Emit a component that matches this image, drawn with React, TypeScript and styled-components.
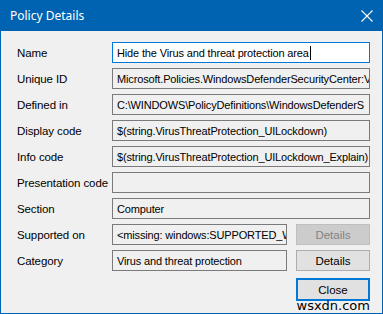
import React from "react";
import styled, { createGlobalStyle } from "styled-components";

const Global = createGlobalStyle`
  html, body { margin: 0; padding: 0; background: #f0f0f0; }
  body { font-family: "Noto Sans", "Liberation Sans", sans-serif; }
`;

const Window = styled.div`
  width: 383px;
  height: 314px;
  box-sizing: border-box;
  border: 1px solid #0063b1;
  border-top: none;
  background: #f0f0f0;
  display: flex;
  flex-direction: column;
  position: relative;
  overflow: hidden;
`;

const TitleBar = styled.div`
  height: 31px;
  margin: 0 -1px;
  background: #0063b1;
  color: #fff;
  display: flex;
  align-items: center;
  justify-content: space-between;
  padding: 0 10px 0 10px;
`;

const Title = styled.span`
  font-family: "Noto Sans", sans-serif;
  font-size: 12px;
  margin-top: -1px;
`;

const Body = styled.div`
  padding: 11px 12px 0 16px;
  display: grid;
  grid-template-columns: 95px 1fr;
  grid-auto-rows: 21px;
  row-gap: 5px;
`;

const Label = styled.div`
  font-family: "Liberation Sans", sans-serif;
  font-size: 11.5px;
  letter-spacing: -0.1px;
  color: #000;
  display: flex;
  align-items: center;
  white-space: nowrap;
`;

const Field = styled.div<{ $focused?: boolean }>`
  box-sizing: border-box;
  height: 21px;
  border: 1px solid ${(p) => (p.$focused ? "#0078d7" : "#7a7a7a")};
  background: ${(p) => (p.$focused ? "#ffffff" : "#f0f0f0")};
  font-family: "Liberation Sans", sans-serif;
  font-size: 11px;
  letter-spacing: -0.15px;
  color: #000;
  padding: 0 0 0 4px;
  display: flex;
  align-items: center;
  white-space: nowrap;
  overflow: hidden;
  min-width: 0;
`;

const Caret = styled.span`
  display: inline-block;
  width: 1px;
  height: 14px;
  background: #000;
  margin-left: 1px;
  flex: none;
`;

const FieldWithButton = styled.div`
  display: grid;
  grid-template-columns: 1fr 74px;
  column-gap: 9px;
  min-width: 0;
`;

const Button = styled.div<{ $disabled?: boolean; $default?: boolean }>`
  box-sizing: border-box;
  height: ${(p) => (p.$default ? "23px" : "21px")};
  border: ${(p) =>
    p.$default ? "2px solid #0078d7" : p.$disabled ? "1px solid #bfbfbf" : "1px solid #adadad"};
  background: ${(p) => (p.$disabled ? "#cccccc" : "#e1e1e1")};
  color: ${(p) => (p.$disabled ? "#838383" : "#000")};
  font-family: "Liberation Sans", sans-serif;
  font-size: 11.5px;
  display: flex;
  align-items: center;
  justify-content: center;
  width: 74px;
`;

const Footer = styled.div`
  display: flex;
  justify-content: flex-end;
  padding: 7px 12px 0 0;
`;

const Watermark = styled.div`
  position: absolute;
  right: 12px;
  bottom: 0px;
  font-family: "DejaVu Sans", sans-serif;
  font-size: 13px;
  color: #000;
  line-height: 14px;
`;

const CloseIcon = () => (
  <svg width="12" height="12" viewBox="0 0 12 12">
    <path d="M0.5 0.5 L11.5 11.5 M11.5 0.5 L0.5 11.5" stroke="#fff" strokeWidth="1.1" />
  </svg>
);

export default function App() {
  return (
    <>
      <Global />
      <Window>
        <TitleBar>
          <Title>Policy Details</Title>
          <CloseIcon />
        </TitleBar>
        <Body>
          <Label>Name</Label>
          <Field $focused>
            Hide the Virus and threat protection area
            <Caret />
          </Field>
          <Label>Unique ID</Label>
          <Field>Microsoft.Policies.WindowsDefenderSecurityCenter:V</Field>
          <Label>Defined in</Label>
          <Field>C:\WINDOWS\PolicyDefinitions\WindowsDefenderS</Field>
          <Label>Display code</Label>
          <Field>$(string.VirusThreatProtection_UILockdown)</Field>
          <Label>Info code</Label>
          <Field>$(string.VirusThreatProtection_UILockdown_Explain)</Field>
          <Label>Presentation code</Label>
          <Field></Field>
          <Label>Section</Label>
          <Field>Computer</Field>
          <Label>Supported on</Label>
          <FieldWithButton>
            <Field>&lt;missing: windows:SUPPORTED_W</Field>
            <Button $disabled>Details</Button>
          </FieldWithButton>
          <Label>Category</Label>
          <FieldWithButton>
            <Field>Virus and threat protection</Field>
            <Button>Details</Button>
          </FieldWithButton>
        </Body>
        <Footer>
          <Button $default>Close</Button>
        </Footer>
        <Watermark>wsxdn.com</Watermark>
      </Window>
    </>
  );
}
